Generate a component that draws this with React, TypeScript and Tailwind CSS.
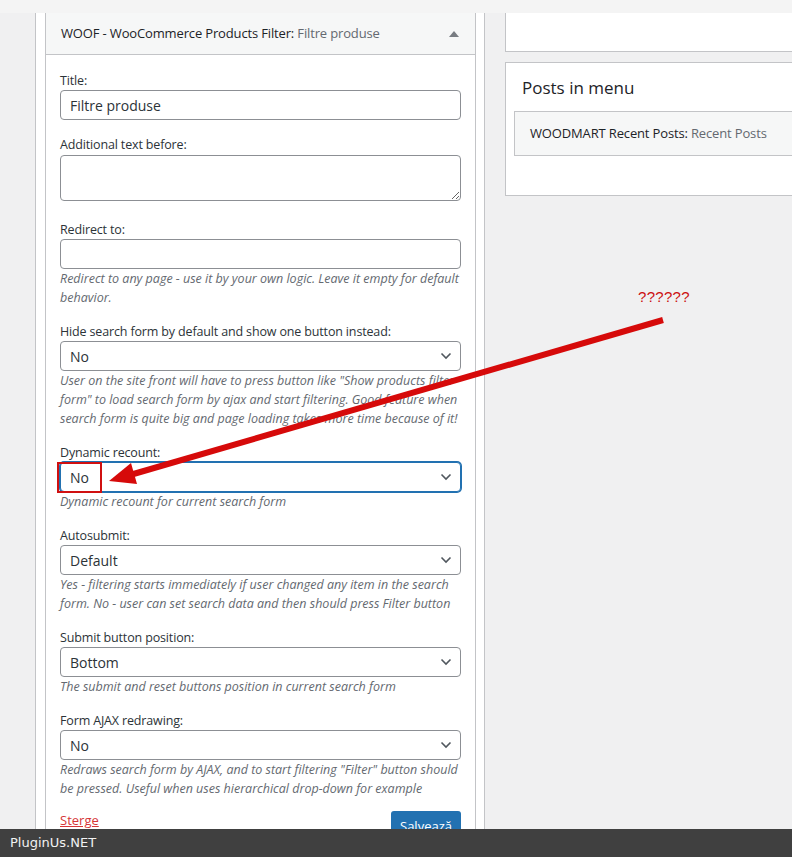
import React from "react";

// WordPress widgets screen with a WOOF filter widget + a red annotation arrow

const font = { fontFamily: '"Open Sans", "Noto Sans", sans-serif' };

function Chevron() {
	return (
		<svg width="12" height="8" viewBox="0 0 12 8" className="shrink-0">
			<path d="M1.5 1.5 L6 6 L10.5 1.5" fill="none" stroke="#50575e" strokeWidth="1.6" />
		</svg>
	);
}

function Label({ children }: { children: React.ReactNode }) {
	return (
		<label className="block text-[12.5px] tracking-[-0.15px] leading-[18px] text-[#2c3338]">{children}</label>
	);
}

function Desc({ lines }: { lines: string[] }) {
	return (
		<p className="text-[12.5px] leading-[19px] italic text-[#646970] whitespace-nowrap">
			{lines.map((l, i) => (
				<span key={i} className="block">
					{l}
				</span>
			))}
		</p>
	);
}

function FakeSelect({ value, focused }: { value: string; focused?: boolean }) {
	return (
		<div
			className={`flex items-center justify-between h-[30px] w-full rounded-[4px] bg-white pl-[9px] pr-[8px] text-[14px] text-[#2c3338] border ${
				focused ? "border-[#2271b1] shadow-[0_0_0_1px_#2271b1]" : "border-[#8c8f94]"
			}`}
		>
			<span>{value}</span>
			<Chevron />
		</div>
	);
}

type Field = {
	label: string;
	value: string;
	desc: string[];
	focused?: boolean;
};

const selects: Field[] = [
	{
		label: "Hide search form by default and show one button instead:",
		value: "No",
		desc: [
			'User on the site front will have to press button like "Show products filter',
			'form" to load search form by ajax and start filtering. Good feature when',
			"search form is quite big and page loading takes more time because of it!",
		],
	},
	{
		label: "Dynamic recount:",
		value: "No",
		focused: true,
		desc: ["Dynamic recount for current search form"],
	},
	{
		label: "Autosubmit:",
		value: "Default",
		desc: [
			"Yes - filtering starts immediately if user changed any item in the search",
			"form. No - user can set search data and then should press Filter button",
		],
	},
	{
		label: "Submit button position:",
		value: "Bottom",
		desc: ["The submit and reset buttons position in current search form"],
	},
	{
		label: "Form AJAX redrawing:",
		value: "No",
		desc: [
			'Redraws search form by AJAX, and to start filtering "Filter" button should',
			"be pressed. Useful when uses hierarchical drop-down for example",
		],
	},
];

export default function App() {
	return (
		<div className="relative w-[792px] h-[857px] overflow-hidden bg-[#f0f0f1]" style={font}>
			<div className="h-[13px] bg-[#f4f4f4]" />

			<div className="flex gap-[20px] pl-[35px]">
				{/* left sidebar column */}
				<div className="w-[450px] shrink-0 bg-white border-x border-[#c3c4c7] pl-[9px] pb-[40px]">
					<div className="w-[431px] border-x border-[#c3c4c7] bg-white">
						<div className="flex items-center justify-between h-[42px] bg-[#f6f7f7] border-b border-[#c3c4c7] pl-[15px] pr-[16px] text-[13px] tracking-[-0.15px]">
							<span className="text-[#1d2327]">
								WOOF - WooCommerce Products Filter: <span className="text-[#646970]">Filtre produse</span>
							</span>
							<svg width="10" height="6" viewBox="0 0 10 6">
								<path d="M5 0 L10 6 L0 6 Z" fill="#787c82" />
							</svg>
						</div>

						<div className="px-[14px] pt-[17px] pb-[20px]">
							<div className="mb-[16px]">
								<Label>Title:</Label>
								<div className="flex items-center h-[30px] rounded-[4px] border border-[#8c8f94] pl-[9px] text-[14px] text-[#2c3338]">
									Filtre produse
								</div>
							</div>

							<div className="mb-[20px]">
								<Label>Additional text before:</Label>
								<textarea className="block mt-px w-full h-[46px] rounded-[4px] border border-[#8c8f94] bg-white" />
							</div>

							<div className="mb-[16px]">
								<Label>Redirect to:</Label>
								<div className="h-[30px] rounded-[4px] border border-[#8c8f94]" />
								<Desc
									lines={[
										"Redirect to any page - use it by your own logic. Leave it empty for default",
										"behavior.",
									]}
								/>
							</div>

							{selects.map((f) => (
								<div key={f.label} className="mb-[16px]">
									<Label>{f.label}</Label>
									<FakeSelect value={f.value} focused={f.focused} />
									<Desc lines={f.desc} />
								</div>
							))}

							<div className="flex items-start justify-between -mt-[3px]">
								<a className="text-[13px] leading-[19px] text-[#d63638] underline">Sterge</a>
								<button className="h-[32px] w-[70px] rounded-[3px] bg-[#2271b1] text-[13px] text-white">
									Salvează
								</button>
							</div>
						</div>
					</div>
				</div>

				{/* right sidebar column */}
				<div className="flex-1 flex flex-col gap-[10px]">
					<div className="h-[39px] bg-white border-l border-b border-[#c3c4c7]" />
					<div className="h-[134px] bg-white border-y border-l border-[#c3c4c7] pl-[8px] pt-[13px]">
						<h2 className="pl-[8px] text-[17px] leading-[24px] text-[#1d2327]">Posts in menu</h2>
						<div className="mt-[11px] flex items-center h-[45px] bg-[#f6f7f7] border-y border-l border-[#c3c4c7] pl-[15px] text-[13px] tracking-[-0.15px]">
							<span className="text-[#1d2327]">
								WOODMART Recent Posts: <span className="text-[#646970]">Recent Posts</span>
							</span>
						</div>
					</div>
				</div>
			</div>

			{/* annotation overlay */}
			<svg className="absolute inset-0 pointer-events-none" width="792" height="857" viewBox="0 0 792 857">
				<rect x="58" y="463" width="43" height="29" fill="none" stroke="#d01010" strokeWidth="2" />
				<line x1="663" y1="320" x2="130" y2="475" stroke="#d60a0a" strokeWidth="6" />
				<polygon points="109,481 137,484 131,463" fill="#d60a0a" />
			</svg>
			<div
				className="absolute left-[638px] top-[287px] text-[15px] leading-[20px] text-[#cc1111] tracking-[0.3px]"
				style={{ fontFamily: '"Liberation Sans", sans-serif' }}
			>
				??????
			</div>

			<div
				className="absolute bottom-0 left-0 right-0 h-[28px] flex items-center pl-[10px] bg-[#404040] text-[13px] text-[#f2f2f2]"
				style={{ fontFamily: '"DejaVu Sans", sans-serif' }}
			>
				PluginUs.NET
			</div>
		</div>
	);
}
